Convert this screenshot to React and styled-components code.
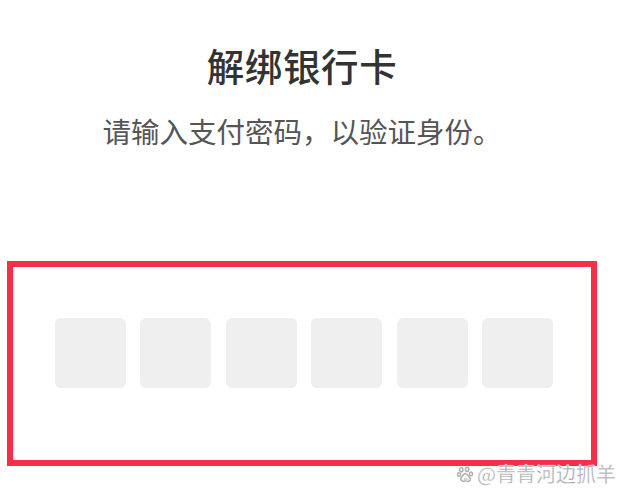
import React from 'react';
import styled, { createGlobalStyle } from 'styled-components';

const GlobalStyle = createGlobalStyle`
  html, body {
    margin: 0;
    padding: 0;
    background: #ffffff;
  }
  body {
    font-family: "Noto Sans CJK SC", "Noto Sans", sans-serif;
  }
`;

const Page = styled.div`
  position: relative;
  width: 626px;
  height: 500px;
  overflow: hidden;
  background: #ffffff;
`;

const Column = styled.div`
  width: 590px;
  margin-left: 7px;
  display: flex;
  flex-direction: column;
  align-items: center;
`;

const Title = styled.h1`
  margin: 40px 0 0;
  font-size: 37.5px;
  line-height: 50px;
  font-weight: 500;
  color: #333333;
  letter-spacing: 0.6px;
`;

const Subtitle = styled.p`
  margin: 21px 0 0;
  font-size: 28.5px;
  line-height: 40px;
  font-weight: 400;
  color: #555555;
`;

const Highlight = styled.div`
  box-sizing: border-box;
  width: 590px;
  height: 205px;
  margin-top: 110px;
  border: 6.5px solid #f2304a;
  display: flex;
  justify-content: center;
  padding: 51px 0 0 4px;
`;

const Digits = styled.div`
  display: grid;
  grid-template-columns: repeat(6, 71px);
  column-gap: 14.4px;
`;

const Cell = styled.div`
  height: 70px;
  border-radius: 6px;
  background: #efefef;
`;

const Watermark = styled.div`
  position: absolute;
  right: 10px;
  bottom: 15px;
  display: flex;
  align-items: center;
  gap: 3px;
  font-size: 20px;
  line-height: 22px;
  color: #a9a9a9;
  text-shadow: 0 0 1px #fff, 0 0 1px #fff;
  -webkit-text-stroke: 0.3px #ffffff;
`;

const Paw = () => (
  <svg width="17" height="17" viewBox="0 0 16 16" fill="none" stroke="#a9a9a9" strokeWidth="1.3">
    <ellipse cx="4" cy="3.5" rx="1.6" ry="2" />
    <ellipse cx="9.5" cy="3.2" rx="1.6" ry="2" />
    <ellipse cx="1.9" cy="8" rx="1.4" ry="1.8" />
    <ellipse cx="13.2" cy="7.5" rx="1.4" ry="1.8" />
    <path d="M7 7.2 C5.6 8.6 3.4 10.4 3.6 12.6 C3.8 14.6 6 14.6 7.4 14.1 C8.6 13.8 9.6 14.6 11 14.4 C13 14 13 11.8 11.6 10.4 C10.2 9 9.4 6.6 7 7.2 Z" />
    <text x="6" y="13.4" fontSize="4" fill="#a9a9a9" stroke="none" fontFamily="Liberation Sans, sans-serif">du</text>
  </svg>
);

const App = () => (
  <Page>
    <GlobalStyle />
    <Column>
      <Title>解绑银行卡</Title>
      <Subtitle>请输入支付密码，以验证身份。</Subtitle>
      <Highlight>
        <Digits>
          {[0, 1, 2, 3, 4, 5].map((i) => (
            <Cell key={i} />
          ))}
        </Digits>
      </Highlight>
    </Column>
    <Watermark>
      <Paw />
      <span>@青青河边抓羊</span>
    </Watermark>
  </Page>
);

export default App;
